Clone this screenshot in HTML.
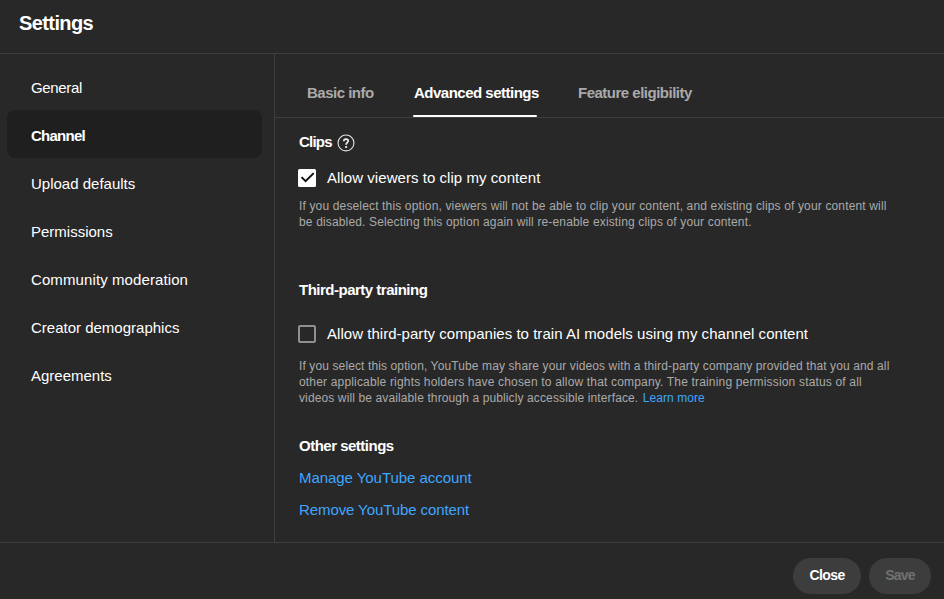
<!DOCTYPE html>
<html>
<head>
<meta charset="utf-8">
<style>
html,body{margin:0;padding:0;width:944px;height:599px;overflow:hidden;background:#282828;}
body{font-family:"Liberation Sans",sans-serif;color:#fff;position:relative;}
.a{position:absolute;white-space:nowrap;}
.hline{position:absolute;left:0;width:944px;height:1px;background:#3e3e3e;}
.vline{position:absolute;width:1px;background:#3e3e3e;}
.t15{font-size:15px;line-height:20px;}
.b15{font-size:15px;line-height:20px;font-weight:700;letter-spacing:-0.5px;}
.d12{font-size:12px;line-height:16px;color:#aaaaaa;letter-spacing:0.15px;}
.nav{left:31px;}
.sel{position:absolute;left:7px;top:110px;width:255px;height:48px;background:#1f1f1f;border-radius:8px;}
.tab{color:#aaaaaa;}
.link{color:#3ea6ff;}
.btn{position:absolute;height:36px;border-radius:18px;background:#3d3d3d;font-size:14px;line-height:34px;font-weight:700;text-align:center;letter-spacing:-0.4px;}
</style>
</head>
<body>
<!-- header -->
<div class="a" style="left:19px;top:9px;font-size:20px;line-height:28px;font-weight:700;letter-spacing:-0.6px;">Settings</div>
<div class="hline" style="top:53px;"></div>

<!-- sidebar -->
<div class="sel"></div>
<div class="a t15 nav" style="top:78px;letter-spacing:-0.35px;">General</div>
<div class="a b15 nav" style="top:126px;letter-spacing:-0.75px;">Channel</div>
<div class="a t15 nav" style="top:174px;">Upload defaults</div>
<div class="a t15 nav" style="top:222px;">Permissions</div>
<div class="a t15 nav" style="top:270px;letter-spacing:0.1px;">Community moderation</div>
<div class="a t15 nav" style="top:318px;">Creator demographics</div>
<div class="a t15 nav" style="top:366px;">Agreements</div>
<div class="vline" style="left:274px;top:54px;height:488px;"></div>

<!-- tabs -->
<div class="a b15 tab" style="left:307px;top:83px;">Basic info</div>
<div class="a b15" style="left:414px;top:83px;">Advanced settings</div>
<div class="a b15 tab" style="left:578px;top:83px;">Feature eligibility</div>
<div class="a" style="left:275px;top:117px;width:669px;height:1px;background:#3e3e3e;"></div>
<div class="a" style="left:413px;top:115px;width:124px;height:2px;background:#fff;border-radius:1px;"></div>

<!-- clips -->
<div class="a b15" style="left:299px;top:132px;letter-spacing:-0.8px;">Clips</div>
<svg class="a" style="left:337px;top:134px;" width="18" height="18" viewBox="0 0 18 18">
  <circle cx="9" cy="8.9" r="7.95" fill="none" stroke="#e4e4e4" stroke-width="1.1"/>
  <path d="M6.8 7.3 C6.8 5.9 7.8 5.2 9 5.2 C10.2 5.2 11.2 5.9 11.2 7.1 C11.2 8.6 9.1 8.9 9.1 10.7" fill="none" stroke="#ececec" stroke-width="1.75"/>
  <rect x="8.1" y="12.1" width="2" height="1.8" fill="#ececec"/>
</svg>
<div class="a" style="left:298px;top:169px;width:18px;height:18px;background:#fff;border-radius:1.5px;"></div>
<svg class="a" style="left:298px;top:169px;" width="18" height="18" viewBox="0 0 18 18">
  <path d="M3.5 8.1 L7.6 12.2 L15.7 4.1" fill="none" stroke="#0f0f0f" stroke-width="2"/>
</svg>
<div class="a t15" style="left:327px;top:168px;letter-spacing:0.05px;">Allow viewers to clip my content</div>
<div class="a d12" style="left:299px;top:198px;">If you deselect this option, viewers will not be able to clip your content, and existing clips of your content will</div>
<div class="a d12" style="left:299px;top:214px;">be disabled. Selecting this option again will re-enable existing clips of your content.</div>

<!-- third party -->
<div class="a b15" style="left:299px;top:280px;">Third-party training</div>
<div class="a" style="left:298px;top:325px;width:14px;height:14px;border:2px solid #909090;border-radius:2px;"></div>
<div class="a t15" style="left:327px;top:324px;letter-spacing:0.035px;">Allow third-party companies to train AI models using my channel content</div>
<div class="a d12" style="left:299px;top:358px;letter-spacing:0.115px;">If you select this option, YouTube may share your videos with a third-party company provided that you and all</div>
<div class="a d12" style="left:299px;top:374px;letter-spacing:0.17px;">other applicable rights holders have chosen to allow that company. The training permission status of all</div>
<div class="a d12" style="left:299px;top:390px;letter-spacing:0.12px;">videos will be available through a publicly accessible interface. <span class="link" style="margin-left:1px;letter-spacing:0.07px;">Learn more</span></div>

<!-- other -->
<div class="a b15" style="left:299px;top:436px;">Other settings</div>
<div class="a t15 link" style="left:299px;top:468px;letter-spacing:-0.05px;">Manage YouTube account</div>
<div class="a t15 link" style="left:299px;top:500px;letter-spacing:-0.09px;">Remove YouTube content</div>

<!-- footer -->
<div class="hline" style="top:542px;"></div>
<div class="btn" style="left:793px;top:558px;width:68px;letter-spacing:-0.6px;">Close</div>
<div class="btn" style="left:869px;top:558px;width:62px;color:#717171;letter-spacing:-0.8px;">Save</div>
</body>
</html>
